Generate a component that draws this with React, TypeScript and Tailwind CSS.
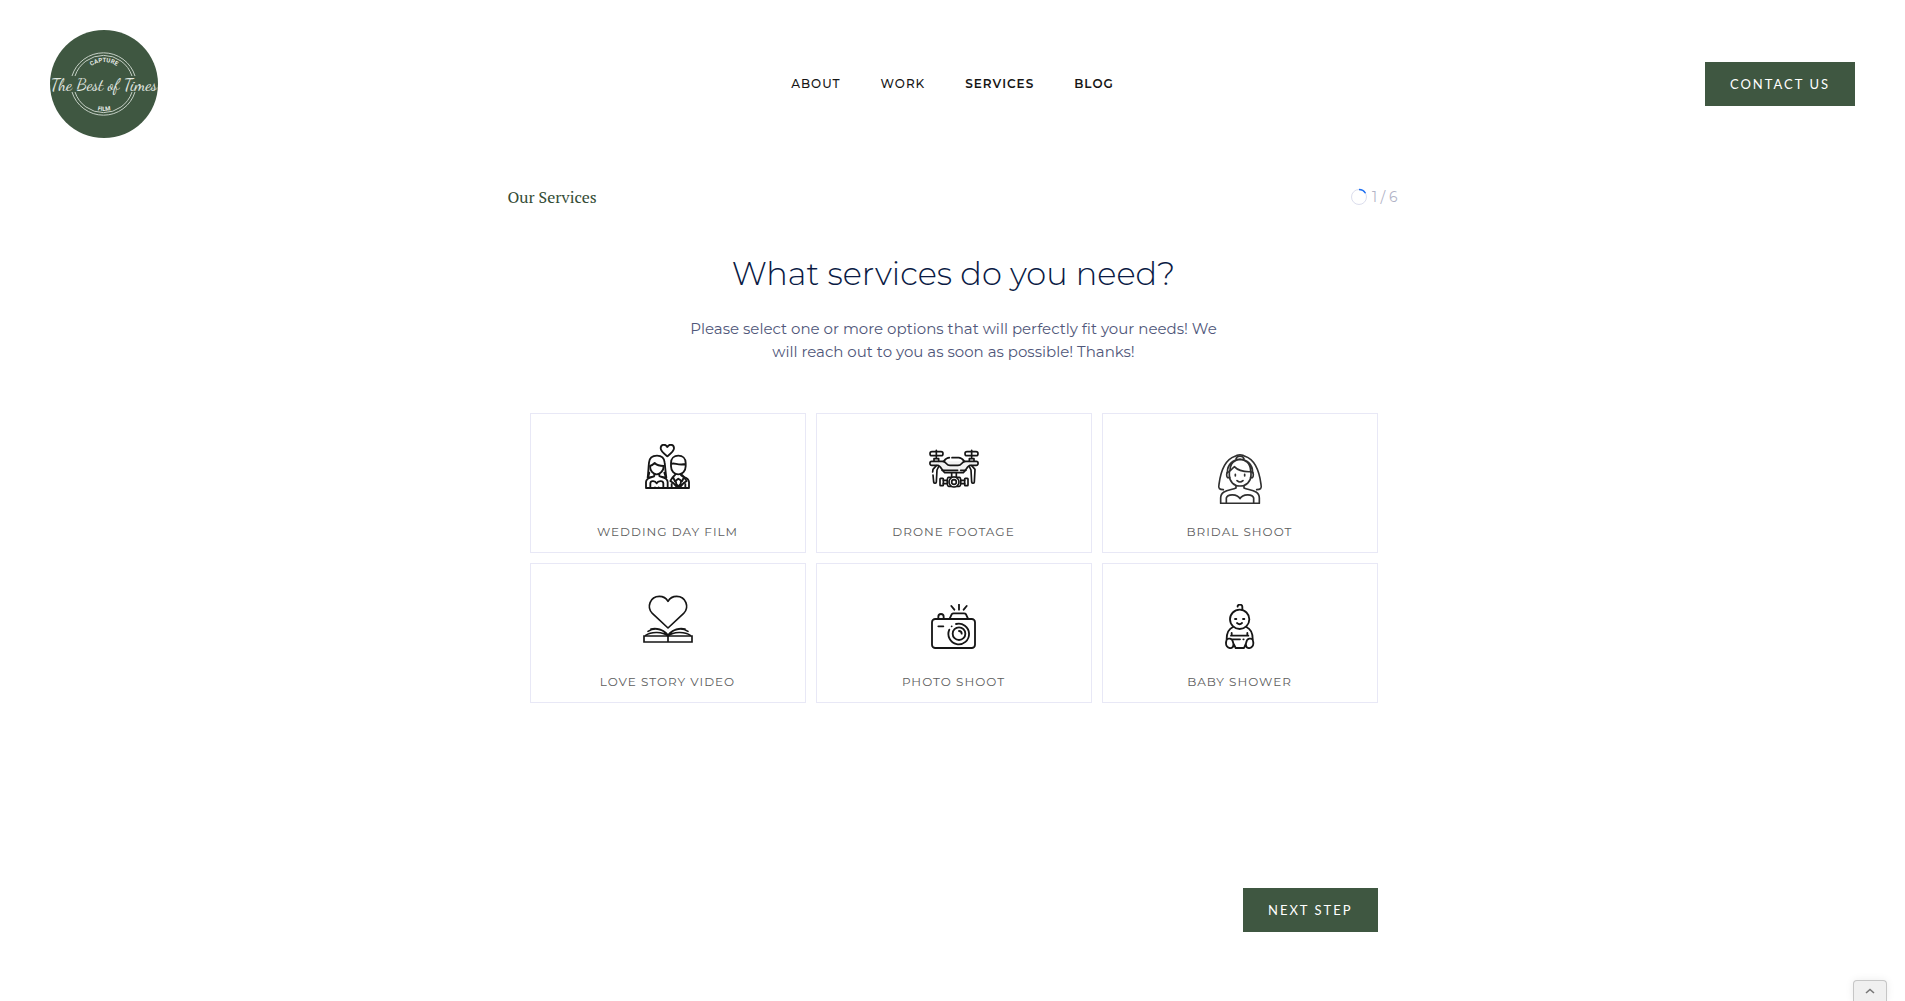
import type { ReactNode } from "react";

const sans = "font-['Montserrat','Inter',sans-serif]";

function Icon({ box, size, width = 5.5, color = "#161616", children }: { box: string; size: string; width?: number; color?: string; children: ReactNode }) {
  return (
    <svg viewBox={box} className={size} fill="none" stroke={color} strokeWidth={width} strokeLinecap="round" strokeLinejoin="round" aria-hidden="true">
      {children}
    </svg>
  );
}

const WeddingIcon = () => (
  <Icon box="0 0 135 135" size="size-[45px]">
    <path d="M67 37C58 30 47 22 47 13C47 0 62-1 67 9C72-1 87 0 87 13C87 22 76 30 67 37Z" />
    <path d="M8 101C10 88 10 74 12 56C13 43 22 35 36 35C50 35 58 43 59 56C61 74 62 88 64 101" />
    <path d="M15 66C22 64 26 60 29 57C36 64 45 66 56 66M15 66C15 80 24 91 35 91S56 80 56 66" />
    <path d="M28 90V96C28 101 4 98 3 114V132H132V114C131 98 113 101 108 94V89M43 90V96C46 101 67 98 68 114V132M13 86L9 101L24 98M58 86L63 101L48 98" />
    <path d="M16 132V118C17 108 31 111 35 118C39 111 54 108 55 118V132M30 132V130M41 132V130" />
    <path d="M78 57C78 43 87 35 100 35S122 43 122 57V67C122 81 112 91 100 91S78 81 78 67ZM78 60C88 54 98 66 122 60" />
    <path d="M91 92L84 99L90 112L100 104L111 112L117 99L110 92M83 100L76 111L86 118L97 131M117 100L125 111L115 118L104 131M92 110L94 120L100 127L107 120L108 110M80 132V120M121 132V120" />
  </Icon>
);

const DroneIcon = () => (
  <Icon box="0 -18 150 150" size="size-[50px]" width={5}>
    <rect x="3" y="5" width="39" height="12" rx="6" />
    <rect x="108" y="5" width="39" height="12" rx="6" />
    <path d="M22 1V22M128 1V22M15 34V26H29V34M121 34V26H135V34" />
    <path d="M42 34H8C1 34 1 46 8 46H27C33 46 37 57 47 68H103C113 57 117 46 123 46H142C149 46 149 34 142 34H108" fill="#d9d9d9" fillOpacity=".35" />
    <path d="M61 23C52 23 48 29 43 35C53 36 51 46 63 46H87C99 46 97 36 107 35C102 29 98 23 89 23H69" />
    <path d="M39 61H86M95 61H111" />
    <path d="M22 47L12 58L11 66M29 50L24 60L22 96C21 101 15 101 14 96L12 75M128 47L138 58L136 96C135 101 129 101 128 96L126 60L121 50" />
    <path d="M68 69V80M82 69V80M59 82H91C97 82 97 109 91 109H59C53 109 53 82 59 82Z" />
    <circle cx="75" cy="96" r="15" fill="white" /><circle cx="75" cy="96" r="7" />
    <rect x="33" y="85" width="10" height="22" rx="2" /><rect x="107" y="85" width="10" height="22" rx="2" />
    <path d="M43 91H55M43 101H55M95 91H107M95 101H107" />
  </Icon>
);

const BrideIcon = () => (
  <Icon box="-9 0 150 150" size="size-[50px]" width={5} color="#303030">
    <path d="M16 107C5 107 0 104 3 91C9 45 24 16 51 7C58 1 74 1 81 7C108 16 123 45 129 91C132 104 127 107 116 107" />
    <path d="M54 15C56 4 76 4 78 15M28 56C28 3 104 3 104 56M36 50C36 5 96 5 98 50" />
    <path d="M34 52V64C34 83 48 96 66 96S99 83 99 64V53M34 51C41 49 45 40 49 38C61 51 78 54 99 53" />
    <path d="M34 54H29C25 56 25 69 29 71H35M99 54H103C107 56 107 69 103 71H98M52 61V66M80 61V66M57 80Q66 88 75 80" />
    <path d="M54 95V102C37 109 8 108 8 132V148H124V132C124 108 95 109 78 102V95" />
    <path d="M25 147V132C28 119 58 119 66 134C74 119 104 119 107 132V147" />
  </Icon>
);

const LoveIcon = () => (
  <Icon box="0 0 150 150" size="size-[50px]" width={5}>
    <path d="M75 102L28 58C10 40 21 7 49 7C62 7 70 13 75 22C80 13 88 7 101 7C129 7 140 40 122 58Z" />
    <path d="M3 126H147V144H3ZM75 126V144" strokeLinejoin="miter" />
    <path d="M8 124C25 112 59 113 75 126C91 113 125 112 142 124M15 112C35 99 62 105 75 124C88 105 115 99 135 112M24 105C42 100 60 108 70 119M126 105C108 100 90 108 80 119" />
  </Icon>
);

const CameraIcon = () => (
  <Icon box="0 0 135 135" size="size-[45px]">
    <rect x="3" y="45" width="129" height="87" rx="10" />
    <path d="M56 44L62 31Q64 28 68 28H99Q103 28 105 31L111 44M22 44V38A8 8 0 0 1 38 38V44M61 6L70 17M84 2V17M107 6L98 17M22 67H37M62 67V67" />
    <path d="M75 60A31 31 0 1 1 55 77" />
    <circle cx="84" cy="89" r="19" />
    <path d="M84 81A8 8 0 0 1 92 89" />
  </Icon>
);

const BabyIcon = () => (
  <Icon box="-24 0 135 135" size="size-[45px]">
    <path d="M38 8C36 0 52 0 52 8V17" />
    <circle cx="44" cy="46" r="29" />
    <path d="M30 45H34M54 45H58M36 57Q44 64 51 57" />
    <path d="M24 69C8 76 5 90 5 105M64 69C80 76 83 90 83 105M20 87V95M67 87V95M18 95H70M23 106H45M55 106H56" />
    <path d="M5 107C-1 125 8 134 19 132C30 128 25 106 15 104C9 103 6 105 5 107ZM83 107C89 125 80 134 69 132C58 128 63 106 73 104C79 103 82 105 83 107ZM26 120L32 132H57L62 120" />
  </Icon>
);

const services = [
  { name: "WEDDING DAY FILM", icon: <WeddingIcon />, pad: "pt-[30px]" },
  { name: "DRONE FOOTAGE", icon: <DroneIcon />, pad: "pt-[30px]" },
  { name: "BRIDAL SHOOT", icon: <BrideIcon />, pad: "pt-10" },
  { name: "LOVE STORY VIDEO", icon: <LoveIcon />, pad: "pt-[30px]" },
  { name: "PHOTO SHOOT", icon: <CameraIcon />, pad: "pt-10" },
  { name: "BABY SHOWER", icon: <BabyIcon />, pad: "pt-10" },
];

function Logo() {
  return (
    <svg viewBox="0 0 108 108" className="size-[108px]" role="img" aria-label="The Best of Times">
      <circle cx="54" cy="54" r="54" fill="#3f5741" />
      <g fill="none" stroke="#c6d0c6">
        <path d="M22 46A33 33 0 0 1 85 46M22 62A33 33 0 0 0 85 62" />
        <path d="M25 46A30 30 0 0 1 82 46M25 62A30 30 0 0 0 82 62" />
        <path id="logo-top" d="M32 54A22 22 0 0 1 76 54" stroke="none" />
        <path id="logo-bottom" d="M27 54A27 27 0 0 0 81 54" stroke="none" />
      </g>
      <g fill="#e3e9e3" textAnchor="middle">
        <text className="font-['Roboto',sans-serif] text-[6px] font-bold"><textPath href="#logo-top" startOffset="50%">CAPTURE</textPath></text>
        <text className="font-['Roboto',sans-serif] text-[6px] font-bold"><textPath href="#logo-bottom" startOffset="50%">FILM</textPath></text>
        <text x="54" y="60" className="font-['Dancing_Script','Liberation_Serif',serif] text-[17px]">The Best of Times</text>
      </g>
    </svg>
  );
}

export default function App() {
  return (
    <div className={`min-h-screen bg-white ${sans}`}>
      <header className="grid grid-cols-[1fr_auto_1fr] items-center px-[50px] py-[30px]">
        <a href="#home" className="justify-self-start"><Logo /></a>
        <nav className="flex gap-10 text-[12px] leading-5 font-medium tracking-[1px] text-[#161616]">
          <a href="#about">ABOUT</a>
          <a href="#work">WORK</a>
          <a href="#services" className="font-semibold">SERVICES</a>
          <a href="#blog" className="font-semibold">BLOG</a>
        </nav>
        <a href="#contact" className="justify-self-end bg-[#3f5741] px-[25px] py-3 font-['Lato',sans-serif] text-[13px] leading-5 tracking-[2px] text-white">CONTACT US</a>
      </header>

      <main className="mx-auto max-w-[890px] pt-[19px]">
        <div className="flex items-center justify-between">
          <h2 className="font-['PT_Serif','Liberation_Serif',serif] text-[16px] leading-5 font-medium text-[#344c36]">Our Services</h2>
          <div className="flex items-center gap-1 text-[14px] leading-5 text-[#b1b3c6]">
            <svg viewBox="0 0 18 18" className="size-[18px]" fill="none" strokeWidth="1" aria-hidden="true">
              <circle cx="9" cy="9" r="7.5" stroke="#dcdeed" />
              <path d="M9 1.5A7.5 7.5 0 0 1 15.5 5.25" stroke="#1d6ff2" strokeWidth="1.4" />
            </svg>
            <span>1 / 6</span>
          </div>
        </div>

        <div className="pr-5 pl-[22px]">
          <h1 className="mt-[44px] text-center text-[32px] leading-[46px] font-light text-[#0a1a44]">What services do you need?</h1>
          <p className="mx-auto mt-[20px] max-w-[560px] text-center text-[15px] leading-[23px] text-[#50577a]">
            Please select one or more options that will perfectly fit your needs! We<br />will reach out to you as soon as possible! Thanks!
          </p>
          <form>
            <div className="mt-[50px] grid grid-cols-3 gap-[10px]">
              {services.map((s) => (
                <label key={s.name} className={`relative flex h-[140px] cursor-pointer flex-col items-center justify-between border border-[#e8e8f6] pb-[10px] has-checked:border-[#3f5741] ${s.pad}`}>
                  <input type="checkbox" name="service" value={s.name} className="sr-only" />
                  {s.icon}
                  <span className="text-[12px] leading-5 tracking-[1px] text-[#5c5c5c]">{s.name}</span>
                </label>
              ))}
            </div>
            <div className="mt-[185px] flex justify-end">
              <button type="button" className="bg-[#3f5741] px-[25px] py-3 font-['Lato',sans-serif] text-[13px] leading-5 tracking-[2px] text-white">NEXT STEP</button>
            </div>
          </form>
        </div>
      </main>

      <button type="button" aria-label="Expand" className="fixed right-[18px] bottom-0 flex h-[21px] w-[34px] items-center justify-center rounded-t border border-b-0 border-[#c6c6c6] bg-[#f0f0f0] shadow-[0_0_8px_rgba(0,0,0,0.08)]">
        <svg viewBox="0 0 10 6" className="h-[6px] w-[10px]" fill="none" stroke="#777" strokeWidth="1.6" aria-hidden="true"><path d="M1 5L5 1.5L9 5" /></svg>
      </button>
    </div>
  );
}
